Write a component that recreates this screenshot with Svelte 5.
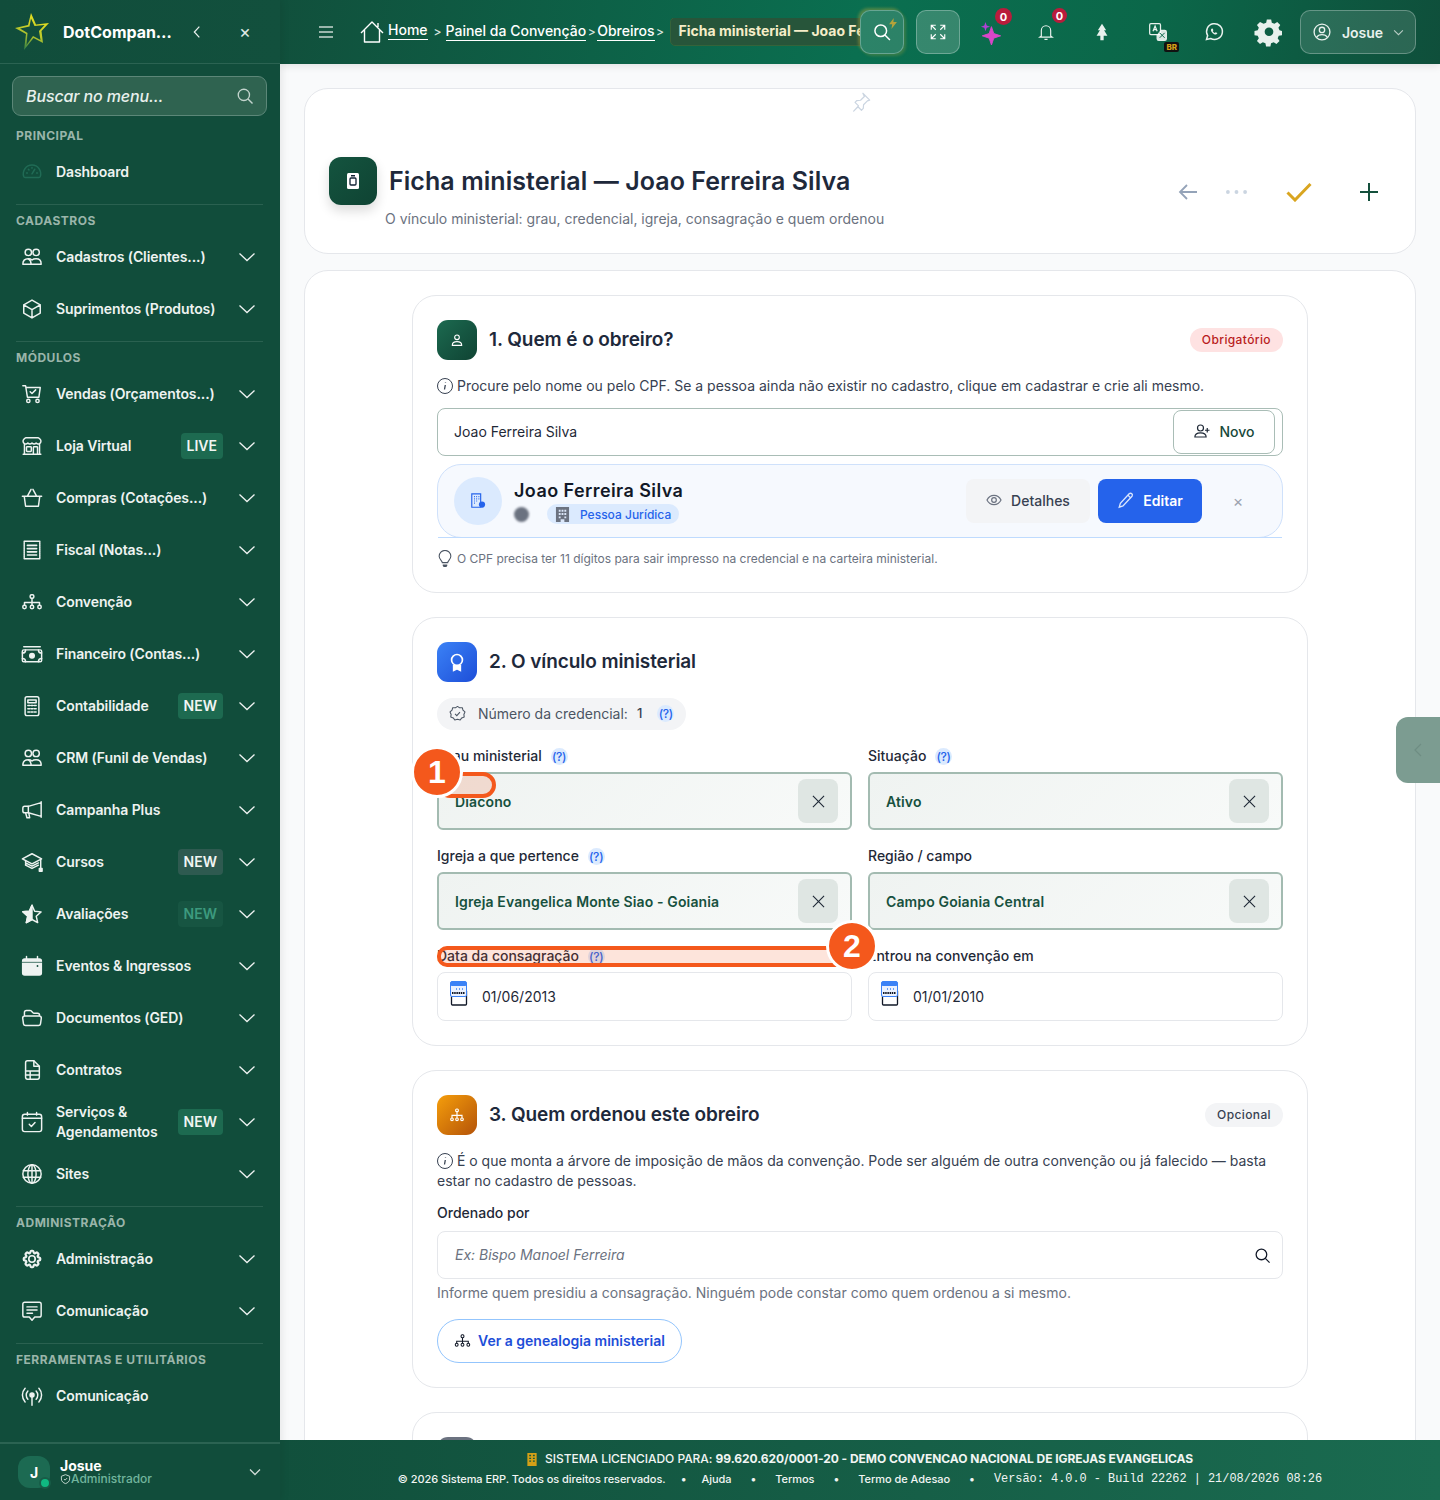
<script>
	const ic = {
		gauge: '<path d="M3 17a9.500 9.500 0 1 1 18 0c-.2.7-.8 1-1.500 1h-15c-.7 0-1.300-.3-1.500-1Z"/><path d="m12 14 3-5M6 13h1M17 13h1M8 9l.7.7M12 7v1"/>',
		users: '<circle cx="8" cy="7" r="3.500"/><circle cx="16.500" cy="7" r="3.500"/><path d="M2 20c0-4 2.500-6 6-6 1.500 0 3 .4 4 1.300 1-.9 2.800-1.300 4.500-1.300 3.500 0 5.500 2 5.500 5.500 0 .3-.2.500-.5.500H2.500c-.3 0-.5-.2-.5-.5Z"/><path d="M8 14c2 1 3 3 3 6"/>',
		cube: '<path d="m21 7.500-9-5.250L3 7.500m18 0-9 5.250m9-5.250v9l-9 5.250M3 7.500l9 5.250M3 7.500v9l9 5.250m0-9v9"/>',
		cart: '<path d="M2 3h3l2 12.500h12.500L21 5H6"/><path d="m10 9.500 2 2 4-4"/><circle cx="8" cy="19.500" r="1.800"/><circle cx="18" cy="19.500" r="1.800"/>',
		store: '<path d="M13.500 21v-7.500a.75.75 0 0 1 .75-.75h3a.75.75 0 0 1 .75.75V21m-4.500 0H2.360m11.140 0H18m0 0h3.640m-1.390 0V9.349M3.750 21V9.349m0 0a3.004 3.004 0 0 0 3.750-.615A2.993 2.993 0 0 0 9.750 9.750c.896 0 1.700-.393 2.250-1.016a2.993 2.993 0 0 0 2.250 1.016c.896 0 1.699-.393 2.250-1.015a3.001 3.001 0 0 0 3.750.614m-16.500 0a3.004 3.004 0 0 1-.621-4.720l1.189-1.190A1.500 1.500 0 0 1 5.378 3h13.243a1.500 1.500 0 0 1 1.060.44l1.190 1.189a3 3 0 0 1-.621 4.720M6.750 18h3.750a.75.75 0 0 0 .75-.75V13.500a.75.75 0 0 0-.75-.75H6.750a.75.75 0 0 0-.75.75v3.750c0 .414.336.75.75.75Z"/>',
		basket: '<path d="M1.500 10h21M3.500 10l1.500 11h14l1.500-11M7 10l4-7.500M17 10l-4-7.500"/>',
		receipt: '<rect x="3.500" y="2.500" width="17" height="19" stroke-dasharray="1.500 .6"/><path d="M7 7h10M7 10.500h10M7 14h10M7 17.500h10" stroke-width="1.800"/>',
		org: '<rect x="10" y="4" width="4" height="4" rx="1.500"/><circle cx="3.800" cy="17.500" r="1.900"/><circle cx="12" cy="17.500" r="1.900"/><circle cx="20.200" cy="17.500" r="1.900"/><path d="M12 8v7.500M3.800 15.500v-3h16.400v3"/>',
		money: '<path d="M3 4h18" /><rect x="1.500" y="7.500" width="21" height="13" rx="1.500"/><circle cx="12" cy="14" r="2.500" fill="currentColor"/><path d="M1.500 11c2 0 3.500-1.500 3.500-3.500M22.500 11c-2 0-3.500-1.500-3.500-3.500M1.500 17c2 0 3.500 1.500 3.500 3.500M22.500 17c-2 0-3.500 1.500-3.500 3.500"/>',
		calc: '<rect x="4.500" y="2" width="15" height="20.500" rx="2"/><path d="M7.500 5.500h9v3h-9ZM7.500 11.500h2M11 11.500h2M14.500 11.500h2M7.500 15h2M11 15h2M14.500 15h2M7.500 18.500h2M11 18.500h2M14.500 18.500h2" stroke-width="1.700"/>',
		mega: '<path d="M22 3v17M22 4 8 8H4a2 2 0 0 0-2 2v3a2 2 0 0 0 2 2h4l14 4"/><path d="M8 8v7M5 15l1.500 5.500h3L8.500 15.500"/>',
		cap: '<path d="M12 3 1.500 8.500 12 14l10.500-5.500Z"/><path d="M5 11v4.500l7 3.500 7-3.500M5 13l7 3.500 7-3.500"/><path d="M21.500 9.500V19"/><rect x="20" y="19" width="3" height="3" fill="currentColor"/>',
		star: '<path d="M12 2.500 14.900 9l7 .7-5.300 4.700 1.600 7L12 18l-6.200 3.500 1.600-7L2 9.600 9.100 9Z"/><path d="M12 2.500 9.100 9 2 9.600l5.400 4.800-1.600 7L12 18Z" fill="currentColor"/>',
		cal: '<path d="M6 1.500v3M18 1.500v3" /><path fill="currentColor" stroke="none" d="M1 6.500A3 3 0 0 1 4 3.500h16a3 3 0 0 1 3 3v13a3 3 0 0 1-3 3H4a3 3 0 0 1-3-3Z"/><path d="M1 8h22" stroke="#114d3b" stroke-width=".8"/><circle cx="18" cy="12" r="1" fill="#114d3b" stroke="none"/>',
		folder: '<path d="M3.750 9.776c.112-.017.227-.026.344-.026h15.812c.117 0 .232.009.344.026m-16.500 0a2.250 2.250 0 0 0-1.883 2.542l.857 6a2.250 2.250 0 0 0 2.227 1.932H19.050a2.250 2.250 0 0 0 2.227-1.932l.857-6a2.250 2.250 0 0 0-1.883-2.542m-16.500 0V6A2.250 2.250 0 0 1 6 3.750h3.879a1.500 1.500 0 0 1 1.060.44l2.122 2.120a1.500 1.500 0 0 0 1.060.44H18A2.250 2.250 0 0 1 20.250 9v.776"/>',
		doc: '<path d="M14 2H7a2 2 0 0 0-2 2v16a2 2 0 0 0 2 2h11a2 2 0 0 0 2-2V8Z"/><path d="M14 2v6h6M5 13h15M5 17.500h15M10 13v9"/>',
		calcheck: '<path d="M7 1.500v3M17 1.500v3"/><rect x="1.500" y="3.500" width="21" height="19" rx="2.500"/><path d="M1.500 8h21"/><path d="m9 14.500 2.300 2.300 4-4.300"/>',
		globe: '<circle cx="12" cy="12" r="10"/><ellipse cx="12" cy="12" rx="4.500" ry="10"/><path d="M2.500 8.500h19M2.500 15.500h19M12 2v20"/>',
		cog: '<g stroke-width="2.400"><path d="M10.343 3.940c.09-.542.56-.94 1.110-.94h1.093c.55 0 1.020.398 1.110.94l.149.894c.07.424.384.764.78.93.398.164.855.142 1.205-.108l.737-.527a1.125 1.125 0 0 1 1.450.12l.773.774c.39.389.44 1.002.12 1.450l-.527.737c-.25.35-.272.806-.107 1.204.165.397.505.71.93.78l.893.15c.543.09.94.559.94 1.109v1.094c0 .55-.397 1.020-.94 1.110l-.894.149c-.424.07-.764.383-.929.78-.165.398-.143.854.107 1.204l.527.738c.32.447.269 1.060-.12 1.450l-.774.773a1.125 1.125 0 0 1-1.449.12l-.738-.527c-.35-.25-.806-.272-1.203-.107-.398.165-.71.505-.781.929l-.149.894c-.09.542-.56.94-1.110.94h-1.094c-.55 0-1.019-.398-1.110-.94l-.148-.894c-.071-.424-.384-.764-.781-.93-.398-.164-.854-.142-1.204.108l-.738.527c-.447.32-1.060.269-1.450-.12l-.773-.774a1.125 1.125 0 0 1-.12-1.450l.527-.737c.25-.35.272-.806.108-1.204-.165-.397-.506-.71-.93-.78l-.894-.15c-.542-.09-.94-.56-.94-1.109v-1.094c0-.55.398-1.020.94-1.110l.894-.149c.424-.07.765-.383.93-.78.165-.398.143-.854-.108-1.204l-.526-.738a1.125 1.125 0 0 1 .12-1.450l.773-.773a1.125 1.125 0 0 1 1.450-.12l.737.527c.35.25.807.272 1.204.107.397-.165.71-.505.78-.929l.15-.894Z"/></g><circle cx="12" cy="12" r="3.500" stroke-width="1.800"/>',
		chat: '<path d="M4 2.500h16a2 2 0 0 1 2 2v12a2 2 0 0 1-2 2h-5L12 22l-3-3.500H4a2 2 0 0 1-2-2v-12a2 2 0 0 1 2-2Z"/><path d="M6.500 7.500h11M6.500 11h11M6.500 14.500h6"/>',
		radio: '<circle cx="12" cy="11" r="2.200" fill="currentColor"/><path d="M12 13v9M7.500 6.500a6.500 6.500 0 0 0 0 9M16.500 6.500a6.500 6.500 0 0 1 0 9M4.500 3.500a11 11 0 0 0 0 15M19.500 3.500a11 11 0 0 1 0 15"/>'
	};

	const sections = [
		{ title: 'Principal', items: [{ name: 'Dashboard', icon: 'gauge', dim: true, noArrow: true }] },
		{ title: 'Cadastros', items: [
			{ name: 'Cadastros (Clientes...)', icon: 'users' },
			{ name: 'Suprimentos (Produtos)', icon: 'cube' }
		] },
		{ title: 'Módulos', items: [
			{ name: 'Vendas (Orçamentos...)', icon: 'cart' },
			{ name: 'Loja Virtual', icon: 'store', badge: 'LIVE' },
			{ name: 'Compras (Cotações...)', icon: 'basket' },
			{ name: 'Fiscal (Notas...)', icon: 'receipt' },
			{ name: 'Convenção', icon: 'org' },
			{ name: 'Financeiro (Contas...)', icon: 'money' },
			{ name: 'Contabilidade', icon: 'calc', badge: 'NEW' },
			{ name: 'CRM (Funil de Vendas)', icon: 'users' },
			{ name: 'Campanha Plus', icon: 'mega' },
			{ name: 'Cursos', icon: 'cap', badge: 'NEW', tone: 'grey' },
			{ name: 'Avaliações', icon: 'star', badge: 'NEW', tone: 'faint' },
			{ name: 'Eventos & Ingressos', icon: 'cal' },
			{ name: 'Documentos (GED)', icon: 'folder' },
			{ name: 'Contratos', icon: 'doc' },
			{ name: 'Serviços & Agendamentos', icon: 'calcheck', badge: 'NEW' },
			{ name: 'Sites', icon: 'globe' }
		] },
		{ title: 'Administração', items: [
			{ name: 'Administração', icon: 'cog' },
			{ name: 'Comunicação', icon: 'chat' }
		] },
		{ title: 'Ferramentas e Utilitários', items: [{ name: 'Comunicação', icon: 'radio', noArrow: true }] }
	];
</script>

<div class="app">
	<aside class="sidebar">
		<div class="brand">
			<svg class="logo" viewBox="0 0 35 38">
				<defs>
					<linearGradient id="starGrad" x1="0.7" y1="0" x2="0.3" y2="1">
						<stop offset="0" stop-color="#efe31d" />
						<stop offset="0.55" stop-color="#bcc92b" />
						<stop offset="1" stop-color="#2f7f45" />
					</linearGradient>
				</defs>
				<path fill="url(#starGrad)" fill-rule="evenodd" d="M16 0 21 11.500 34 10 26.500 18 28 30 18.500 25 9 37 11 21 0 15 13 12ZM16 5.500 14.500 13.500 5 15.500 12.500 20 11.500 32 18 23 25.500 27 24 18 29.500 12 19.500 13Z" />
			</svg>
			<span class="brand-name">DotCompany ERP</span>
			<svg class="brand-btn" viewBox="0 0 24 24" fill="none" stroke="currentColor" stroke-width="1.800"><path d="M15.500 4 8 12l7.500 8" /></svg>
			<span class="brand-close">×</span>
		</div>

		<div class="menu-search">
			<span>Buscar no menu...</span>
			<svg viewBox="0 0 24 24" fill="none" stroke="currentColor" stroke-width="1.800"><circle cx="10.500" cy="10.500" r="7.500" /><path d="m16 16 6 6" /></svg>
		</div>

		<nav>
			{#each sections as sec, i}
				<div class="nav-section" class:ruled={i < sections.length - 1}>
					<div class="nav-title">{sec.title}</div>
					{#each sec.items as item}
						<div class="nav-item">
							<svg class="nav-icon" class:dim={item.dim} viewBox="0 0 24 24" fill="none" stroke="currentColor" stroke-width="1.600" stroke-linecap="round" stroke-linejoin="round">{@html ic[item.icon]}</svg>
							<span class="nav-label">{item.name}</span>
							{#if item.badge}
								<span class="nav-badge {item.tone || ''}">{item.badge}</span>
							{/if}
							{#if !item.noArrow}
								<svg class="nav-arrow" viewBox="0 0 18 10" fill="none" stroke="currentColor" stroke-width="1.300"><path d="M1.500 1.500 9 8.500l7.500-7" /></svg>
							{/if}
						</div>
					{/each}
				</div>
			{/each}
		</nav>

		<div class="side-user">
			<div class="side-avatar">J<i></i></div>
			<div class="side-who">
				<strong>Josue</strong>
				<span><svg viewBox="0 0 24 24" fill="none" stroke="currentColor" stroke-width="2"><path d="M12 2.500 21 6v6c0 5-4 8.500-9 10-5-1.500-9-5-9-10V6Z" /><path d="m8.500 12 2.500 2.500 4.500-4.500" /></svg>Administrador</span>
			</div>
			<svg class="side-caret" viewBox="0 0 12 8" fill="none" stroke="currentColor" stroke-width="1.300"><path d="M1 1.500 6 6.500l5-5" /></svg>
		</div>
	</aside>

	<main class="main">
		<header class="topbar">
			<svg class="burger" viewBox="0 0 14 12" fill="none" stroke="currentColor" stroke-width="1.300"><path d="M0 1h14M0 6h14M0 11h14" /></svg>
			<div class="crumbs">
				<svg class="home" viewBox="0 0 24 22" fill="none" stroke="currentColor" stroke-width="1.400" stroke-linejoin="round"><path d="M1 12 12 1l11 11M4.500 9v12h15V9M18 2v4" /></svg>
				<a class="first">Home</a>
				<em class="sep wide">&gt;</em>
				<a>Painel da Convenção</a>
				<em class="sep">&gt;</em>
				<a>Obreiros</a>
				<em class="sep">&gt;</em>
				<span class="crumb-now">Ficha ministerial — Joao Ferreira Silva</span>
			</div>
			<div class="tools">
				<button class="glass search-btn">
					<svg viewBox="0 0 24 24" fill="none" stroke="currentColor" stroke-width="1.800"><circle cx="10.500" cy="10.500" r="7" /><path d="m15.500 15.500 6 6" /></svg>
					<svg class="bolt" viewBox="0 0 10 14" fill="#b5a33a"><path d="M6 0 0 8h4l-1 6 7-9H5.500Z" /></svg>
				</button>
				<button class="glass expand-btn">
					<svg viewBox="0 0 24 24" fill="none" stroke="currentColor" stroke-width="1.500"><path d="M3 9V3h6M3 3l6 6M21 9V3h-6M21 3l-6 6M3 15v6h6M3 21l6-6M21 15v6h-6M21 21l-6-6" /></svg>
				</button>
				<div class="tool spark">
					<svg viewBox="0 0 24 24" fill="#d946c8"><path d="M12.500 4 15 11.500 22.500 14 15 16.500 12.500 24 10 16.500 2.500 14 10 11.500Z" stroke="#d946c8" stroke-linejoin="round" /><path d="M6 -1 7.300 2.700 11 4 7.300 5.300 6 9 4.700 5.300 1 4 4.700 2.700Z" fill="#b13fd6" /></svg>
					<b class="count">0</b>
				</div>
				<div class="tool bell">
					<svg viewBox="0 0 24 24" fill="none" stroke="currentColor" stroke-width="1.500"><path d="M6 17V10a6 6 0 0 1 12 0v7l2 1.500H4ZM10 21.500h4" /></svg>
					<b class="count">0</b>
				</div>
				<div class="tool tree">
					<svg viewBox="0 0 24 24" fill="currentColor"><path d="M12 2 7 10h2.500l-4 6.500H10V22h4v-5.500h4.500l-4-6.500H17Z" /></svg>
				</div>
				<div class="tool lang">
					<svg viewBox="0 0 24 24" fill="none" stroke="currentColor" stroke-width="1.500"><rect x="2" y="2" width="13" height="13" rx="1.500" /><path d="m6 11 2.500-6 2.500 6M7 9.200h3" /><path d="M11 15v5a2 2 0 0 0 2 2h7a2 2 0 0 0 2-2v-8a2 2 0 0 0-2-2h-5" fill="#fff" fill-opacity=".85" /><path d="m14 13 6 6M20 13l-6 6" stroke="#0b6a4d" stroke-width="1.200" /></svg>
					<span class="br">BR</span>
				</div>
				<div class="tool wa">
					<svg viewBox="0 0 24 24" fill="none" stroke="currentColor" stroke-width="1.800"><path d="M3 21l1.400-4.700A9.500 9.500 0 1 1 8 19.800Z" /><path d="M9 8c-1 .8-.8 2.500.5 4.200 1.500 2 3.500 3 4.800 2.800 1-.2 1.600-1 1.700-1.700l-2-1-1 1c-1-.4-2-1.300-2.500-2.500l.8-1-1-2Z" fill="currentColor" stroke="none" /></svg>
				</div>
				<div class="tool gear">
					<svg viewBox="0 0 24 24" fill="currentColor" fill-rule="evenodd"><path d="M10 1h4l.6 3 2.400 1 2.600-1.700 2.800 2.800L20.700 8.700l1 2.300 2.300.7v4l-3 .6-1 2.400 1.700 2.600-2.800 2.800-2.600-1.700-2.400 1-.6 3h-4l-.6-3-2.400-1-2.600 1.700-2.800-2.800 1.700-2.600-1-2.400-3-.6v-4l3-.6 1-2.400-1.700-2.600 2.800-2.800L7 5l2.400-1ZM12 8.500a4 4 0 1 0 0 8 4 4 0 0 0 0-8Z" transform="translate(0 -.5) scale(1 .98)" /></svg>
				</div>
				<button class="glass user-btn">
					<svg viewBox="0 0 24 24" fill="none" stroke="currentColor" stroke-width="1.600"><circle cx="12" cy="12" r="9.500" /><circle cx="12" cy="9.500" r="3.200" /><path d="M5.500 18.500c1.500-2.500 4-3.300 6.500-3.300s5 .8 6.500 3.300" /></svg>
					<span>Josue</span>
					<svg class="user-caret" viewBox="0 0 12 8" fill="none" stroke="currentColor" stroke-width="1.200"><path d="M1 1.500 6 6.500l5-5" /></svg>
				</button>
			</div>
		</header>

		<div class="content">
			<section class="page-head card">
				<svg class="pin" viewBox="0 0 24 24" fill="none" stroke="currentColor" stroke-width="1.300" stroke-linejoin="round"><path d="M14 2.500l7.500 7.500-2.500.8-4.200 4.200-.3 4-2 2-3.800-3.800L4 22l5.300-5.800L5.500 12.400l2-2 4-.3L15.700 6Z" /></svg>
				<div class="head-left">
					<div class="head-row">
						<div class="head-icon">
							<svg viewBox="0 0 14 16"><rect x="1" y="0" width="12" height="16" rx="1.500" fill="#fff" /><rect x="4" y="5" width="6" height="7" rx="1" fill="none" stroke="#123" stroke-width="1.300" /><rect x="5" y="2" width="4" height="1.500" fill="#123" /></svg>
						</div>
						<h1>Ficha ministerial — Joao Ferreira Silva</h1>
					</div>
					<p class="head-sub">O vínculo ministerial: grau, credencial, igreja, consagração e quem ordenou</p>
				</div>
				<div class="head-actions">
					<svg class="back" viewBox="0 0 20 18" fill="none" stroke="currentColor" stroke-width="1.800"><path d="M19 9H2M9 2 2 9l7 7" /></svg>
					<svg class="dots" viewBox="0 0 22 4" fill="currentColor"><circle cx="2" cy="2" r="2" /><circle cx="11" cy="2" r="2" /><circle cx="20" cy="2" r="2" /></svg>
					<svg class="ok" viewBox="0 0 26 20" fill="none" stroke="currentColor" stroke-width="3"><path d="M1.500 10.500 9 18 24.500 2" /></svg>
					<svg class="plus" viewBox="0 0 18 18" fill="none" stroke="currentColor" stroke-width="2"><path d="M9 0v18M0 9h18" /></svg>
				</div>
			</section>

			<div class="form-card card">
				<div class="form-col">
					<section class="block">
						<div class="block-head">
							<div class="block-icon green">
								<svg viewBox="0 0 24 24" fill="none" stroke="currentColor" stroke-width="1.700"><circle cx="12" cy="8" r="3.500" /><path d="M5 19.500c0-3 2.500-5 7-5s7 2 7 5v.5H5Z" /></svg>
							</div>
							<h2>1. Quem é o obreiro?</h2>
							<span class="tag required">Obrigatório</span>
						</div>
						<p class="info">
							<svg viewBox="0 0 16 16" fill="none" stroke="currentColor" stroke-width="1"><circle cx="8" cy="8" r="7.500" /><path d="M8.300 7 7.500 11.500M8.500 4.500v.5" stroke-width="1.300" /></svg>
							Procure pelo nome ou pelo CPF. Se a pessoa ainda não existir no cadastro, clique em cadastrar e crie ali mesmo.
						</p>
						<div class="search-line">
							<span>Joao Ferreira Silva</span>
							<button class="new-btn">
								<svg viewBox="0 0 24 24" fill="none" stroke="currentColor" stroke-width="1.600"><circle cx="10" cy="8" r="4" /><path d="M2.500 20c0-3.500 3-5.500 7.500-5.500s7.500 2 7.500 5.500ZM19 8v6M16 11h6" /></svg>
								Novo
							</button>
						</div>
						<div class="person">
							<div class="person-avatar">
								<svg viewBox="0 0 18 18" fill="none" stroke="#2563eb" stroke-width="1.300"><path d="M2 1h10v15H2Z" /><path d="M4.500 4h1M7 4h1M9.500 4h1M4.500 6.500h1M7 6.500h1M9.500 6.500h1M4.500 9h1M7 9h1M4.500 11.500h1" stroke-width="1.400" /><circle cx="13.500" cy="13" r="3.500" fill="#2563eb" stroke="none" /></svg>
							</div>
							<div class="person-main">
								<strong>Joao Ferreira Silva</strong>
								<div class="person-meta">
									<i class="print"></i>
									<span class="kind">
										<svg viewBox="0 0 16 18" fill="#6b7280"><path d="M1 1h14v16H1Z" /><path d="M4 4h2v2H4ZM7 4h2v2H7ZM10 4h2v2h-2ZM4 7.500h2v2H4ZM7 7.500h2v2H7ZM10 7.500h2v2h-2ZM4 11h2v2H4ZM10 11h2v2h-2ZM6 14h4v3H6Z" fill="#dbe6f8" /></svg>
										Pessoa Jurídica
									</span>
								</div>
							</div>
							<button class="soft-btn">
								<svg viewBox="0 0 24 24" fill="none" stroke="#6b7280" stroke-width="1.800"><path d="M1.500 12C4 7 8 5 12 5s8 2 10.500 7C20 17 16 19 12 19s-8-2-10.500-7Z" /><circle cx="12" cy="12" r="3.500" /></svg>
								Detalhes
							</button>
							<button class="primary-btn">
								<svg viewBox="0 0 24 24" fill="none" stroke="currentColor" stroke-width="1.800"><path d="M16.500 3.500a2.500 2.500 0 0 1 3.500 3.500L8 20l-5 1.500L4.500 16.500Z" /><path d="m14.500 5.500 4 4" /></svg>
								Editar
							</button>
							<span class="person-x">×</span>
						</div>
						<p class="tip">
							<svg viewBox="0 0 16 20" fill="none" stroke="#4b5563" stroke-width="1.200"><path d="M5 14c0-2-3.500-3.500-3.500-7a6.500 6.500 0 0 1 13 0c0 3.500-3.500 5-3.500 7Z" /><path d="M5.500 16h5v1.500l-1 1.500h-3l-1-1.500Z" fill="#4b5563" stroke="none" /></svg>
							O CPF precisa ter 11 dígitos para sair impresso na credencial e na carteira ministerial.
						</p>
					</section>

					<section class="block">
						<div class="block-head">
							<div class="block-icon blue">
								<svg viewBox="0 0 24 24" fill="none" stroke="currentColor" stroke-width="2"><circle cx="12" cy="9.500" r="6.500" /><path d="M8 15.500v6.500l4-2 4 2v-6.500" fill="currentColor" /></svg>
							</div>
							<h2>2. O vínculo ministerial</h2>
						</div>
						<div class="cred">
							<svg viewBox="0 0 24 24" fill="none" stroke="#4b5563" stroke-width="1.500"><path d="M12 2l3 2 3.800-.2.9 3.500 2.800 2.500-1.500 3.500.5 3.700-3.500 1.200-2.200 3-3.800-1-3.800 1-2.200-3-3.500-1.200.5-3.700L1.500 9.800l2.800-2.500.9-3.500L9 4Z" stroke-linejoin="round" /><path d="m8.500 12.500 2.500 2.500 4.500-5" /></svg>
							<span>Número da credencial:</span>
							<b>1</b>
							<span class="q">(?)</span>
						</div>

						<div class="fields">
							<div class="field">
								<div class="label">Grau ministerial <span class="q">(?)</span></div>
								<div class="chosen"><span>Diacono</span><button aria-label="Limpar"><svg viewBox="0 0 14 14" fill="none" stroke="currentColor" stroke-width="1.200"><path d="m1 1 12 12M13 1 1 13" /></svg></button></div>
							</div>
							<div class="field">
								<div class="label">Situação <span class="q">(?)</span></div>
								<div class="chosen"><span>Ativo</span><button aria-label="Limpar"><svg viewBox="0 0 14 14" fill="none" stroke="currentColor" stroke-width="1.200"><path d="m1 1 12 12M13 1 1 13" /></svg></button></div>
							</div>
							<div class="field">
								<div class="label">Igreja a que pertence <span class="q">(?)</span></div>
								<div class="chosen"><span>Igreja Evangelica Monte Siao - Goiania</span><button aria-label="Limpar"><svg viewBox="0 0 14 14" fill="none" stroke="currentColor" stroke-width="1.200"><path d="m1 1 12 12M13 1 1 13" /></svg></button></div>
							</div>
							<div class="field">
								<div class="label">Região / campo</div>
								<div class="chosen"><span>Campo Goiania Central</span><button aria-label="Limpar"><svg viewBox="0 0 14 14" fill="none" stroke="currentColor" stroke-width="1.200"><path d="m1 1 12 12M13 1 1 13" /></svg></button></div>
							</div>
							<div class="field">
								<div class="label">Data da consagração <span class="q">(?)</span></div>
								<div class="date">
									<svg viewBox="0 0 18 25" fill="none"><rect x="1.500" y="9" width="15" height="15" rx="1" stroke="#111827" stroke-width="1.300" fill="#fff" /><rect x=".5" y=".5" width="16" height="15" rx="1.500" fill="#eaf1fe" stroke="#3b82f6" /><rect x=".5" y=".5" width="16" height="4.500" rx="1.500" fill="#3b82f6" /><path d="M2 12h13" stroke="#111827" stroke-width="2" stroke-dasharray="1.500 .7" /><path d="M6 8h1M9 8h1M12 8h1" stroke="#3b82f6" stroke-width="1.300" /></svg>
									01/06/2013
								</div>
							</div>
							<div class="field">
								<div class="label">Entrou na convenção em</div>
								<div class="date">
									<svg viewBox="0 0 18 25" fill="none"><rect x="1.500" y="9" width="15" height="15" rx="1" stroke="#111827" stroke-width="1.300" fill="#fff" /><rect x=".5" y=".5" width="16" height="15" rx="1.500" fill="#eaf1fe" stroke="#3b82f6" /><rect x=".5" y=".5" width="16" height="4.500" rx="1.500" fill="#3b82f6" /><path d="M2 12h13" stroke="#111827" stroke-width="2" stroke-dasharray="1.500 .7" /><path d="M6 8h1M9 8h1M12 8h1" stroke="#3b82f6" stroke-width="1.300" /></svg>
									01/01/2010
								</div>
							</div>

							<div class="mark mark-one"></div>
							<div class="step step-one">1</div>
							<div class="mark mark-two"></div>
							<div class="step step-two">2</div>
						</div>
					</section>

					<section class="block">
						<div class="block-head">
							<div class="block-icon amber">
								<svg viewBox="0 0 24 24" fill="none" stroke="currentColor" stroke-width="1.700"><rect x="10" y="3" width="4" height="4" rx="1.500" /><circle cx="4.500" cy="18.500" r="2" /><circle cx="12" cy="18.500" r="2" /><circle cx="19.500" cy="18.500" r="2" /><path d="M12 7v9.500M4.500 16.500V12.500h15v4" /></svg>
							</div>
							<h2>3. Quem ordenou este obreiro</h2>
							<span class="tag optional">Opcional</span>
						</div>
						<p class="info">
							<svg viewBox="0 0 16 16" fill="none" stroke="currentColor" stroke-width="1"><circle cx="8" cy="8" r="7.500" /><path d="M8.300 7 7.500 11.500M8.500 4.500v.5" stroke-width="1.300" /></svg>
							É o que monta a árvore de imposição de mãos da convenção. Pode ser alguém de outra convenção ou já falecido — basta estar no cadastro de pessoas.
						</p>
						<div class="label order-label">Ordenado por</div>
						<div class="order-input">
							<span>Ex: Bispo Manoel Ferreira</span>
							<svg viewBox="0 0 24 24" fill="none" stroke="#111827" stroke-width="1.800"><circle cx="10.500" cy="10.500" r="7.500" /><path d="m16 16 6 6" /></svg>
						</div>
						<p class="order-hint">Informe quem presidiu a consagração. Ninguém pode constar como quem ordenou a si mesmo.</p>
						<button class="tree-btn">
							<svg viewBox="0 0 24 24" fill="none" stroke="#111827" stroke-width="1.500"><rect x="10" y="4" width="4" height="4" rx="1.500" /><circle cx="3.800" cy="18" r="2" /><circle cx="12" cy="18" r="2" /><circle cx="20.200" cy="18" r="2" /><path d="M12 8v8M3.800 16v-3h16.400v3" /></svg>
							Ver a genealogia ministerial
						</button>
					</section>

					<section class="block last">
						<div class="block-icon slate"></div>
					</section>
				</div>
			</div>
		</div>

		<button class="side-tab" aria-label="Abrir painel">
			<svg viewBox="0 0 8 14" fill="none" stroke="#6f8d83" stroke-width="1.200"><path d="M7 1 1 7l6 6" /></svg>
		</button>

		<footer class="foot">
			<div class="foot-license">
				<svg viewBox="0 0 10 14" fill="#d4a017"><path d="M0 0h10v14H0Z" /><path d="M2 2h2v1.500H2ZM6 2h2v1.500H6ZM2 5h2v1.500H2ZM6 5h2v1.500H6ZM2 8h2v1.500H2ZM6 8h2v1.500H6Z" fill="#17593f" /></svg>
				SISTEMA LICENCIADO PARA: <b>99.620.620/0001-20 - DEMO CONVENCAO NACIONAL DE IGREJAS EVANGELICAS</b>
			</div>
			<div class="foot-links">
				<span>© 2026 Sistema ERP. Todos os direitos reservados.</span>
				<i>•</i><span>Ajuda</span><i>•</i><span>Termos</span><i>•</i><span>Termo de Adesao</span><i>•</i>
				<code>Versão: 4.0.0 - Build 22262 | 21/08/2026 08:26</code>
			</div>
		</footer>
	</main>
</div>

<style>
	:global(body) {
		margin: 0;
		background: #f9fafb;
		font-family: Inter, 'Liberation Sans', sans-serif;
	}

	.app {
		display: grid;
		grid-template-columns: 280px 1fr;
		height: 1500px;
		overflow: hidden;
	}

	button {
		font: inherit;
		cursor: pointer;
	}

	/* sidebar */
	.sidebar {
		display: flex;
		flex-direction: column;
		height: 1500px;
		background: #114d3b;
		color: #eef3f1;
		box-shadow: 2px 0 8px rgba(0, 0, 0, 0.08);
		z-index: 2;
	}

	.brand {
		display: flex;
		align-items: center;
		height: 63px;
		flex: none;
		padding-left: 15px;
		background: linear-gradient(90deg, #114d3b, #12503d);
		border-bottom: 1px solid #2b6352;
	}

	.logo {
		width: 35px;
		height: 38px;
		flex: none;
	}

	.brand-name {
		width: 112px;
		margin-left: 13px;
		overflow: hidden;
		font-size: 16px;
		font-weight: 700;
		color: #fff;
		white-space: nowrap;
		text-overflow: ellipsis;
	}

	.brand-btn {
		width: 16px;
		height: 16px;
		margin-left: 14px;
	}

	.brand-close {
		margin-left: 34px;
		font-size: 18px;
		line-height: 1;
		color: #dfe8e4;
	}

	.menu-search {
		display: flex;
		align-items: center;
		justify-content: space-between;
		flex: none;
		height: 38px;
		margin: 12px 13px 0 12px;
		padding: 0 12px 0 13px;
		background: #2f6350;
		border: 1px solid #5c8778;
		border-radius: 9px;
		font-size: 16px;
		font-style: italic;
		font-weight: 500;
		letter-spacing: -0.12px;
		color: #e8f0ec;
	}

	.menu-search svg {
		width: 18px;
		height: 18px;
		color: #c3d4cd;
	}

	.nav-section {
		padding-top: 8px;
	}

	.nav-section:first-child {
		padding-top: 12px;
	}

	.nav-section.ruled::after {
		content: '';
		display: block;
		height: 1px;
		margin: 6px 17px 0 16px;
		background: #2a6150;
	}

	.nav-title {
		height: 16px;
		margin: 0 16px 2px;
		font-size: 12px;
		font-weight: 700;
		line-height: 16px;
		letter-spacing: 0.5px;
		text-transform: uppercase;
		color: #9ab5aa;
	}

	.nav-item {
		display: flex;
		align-items: center;
		height: 52px;
		padding-left: 21px;
		font-size: 14px;
		font-weight: 600;
		line-height: 20px;
		color: #eef3f1;
	}

	.nav-icon {
		width: 22px;
		height: 22px;
		flex: none;
		margin-right: 13px;
	}

	.nav-icon.dim {
		color: #206b55;
	}

	.nav-label {
		flex: 1;
		min-width: 0;
		letter-spacing: -0.1px;
	}

	.nav-badge {
		height: 26px;
		padding: 0 6px;
		border-radius: 4px;
		background: #1d6a50;
		font-size: 14px;
		line-height: 26px;
		color: #f1f5f3;
	}

	.nav-badge.grey {
		background: #2e5a50;
	}

	.nav-badge.faint {
		background: #175542;
		color: #3c9a7e;
	}

	.nav-arrow {
		width: 18px;
		height: 10px;
		flex: none;
		margin: 0 24px 0 15px;
	}

	nav {
		flex: 1;
		min-height: 0;
	}

	.side-user {
		display: flex;
		align-items: center;
		flex: none;
		height: 56px;
		padding-left: 18px;
		border-top: 2px solid #2b6352;
	}

	.side-avatar {
		position: relative;
		display: flex;
		align-items: center;
		justify-content: center;
		width: 32px;
		height: 32px;
		border-radius: 12px;
		background: #1c6a52;
		font-size: 14px;
		font-weight: 700;
		color: #fff;
	}

	.side-avatar i {
		position: absolute;
		right: -1px;
		bottom: -1px;
		width: 8px;
		height: 8px;
		border: 2px solid #185c47;
		border-radius: 50%;
		background: #10b981;
	}

	.side-who {
		display: flex;
		flex-direction: column;
		flex: 1;
		margin-left: 10px;
	}

	.side-who strong {
		font-size: 14px;
		font-weight: 700;
		line-height: 13px;
		color: #fff;
	}

	.side-who span {
		display: flex;
		align-items: center;
		font-size: 12px;
		font-weight: 500;
		line-height: 14px;
		color: #71b59d;
	}

	.side-who span svg {
		width: 11px;
		height: 12px;
		color: #cfe0d9;
	}

	.side-caret {
		width: 12px;
		height: 8px;
		margin-right: 19px;
		color: #cfdcd7;
	}

	/* topbar */
	.main {
		position: relative;
		min-width: 0;
		display: flex;
		flex-direction: column;
	}

	.topbar {
		position: relative;
		display: flex;
		align-items: center;
		flex: none;
		height: 64px;
		background: linear-gradient(100deg, #11503c 0%, #0a6f50 50%, #0b6749 75%, #0f4f3b 100%);
		color: #fff;
		box-shadow: 0 2px 8px rgba(0, 0, 0, 0.1);
	}

	.burger {
		width: 14px;
		height: 12px;
		margin-left: 39px;
		color: #c7d8d1;
		flex: none;
	}

	.crumbs {
		display: flex;
		align-items: center;
		width: 500px;
		margin-left: 27px;
		overflow: hidden;
		flex: none;
		font-size: 14px;
		font-weight: 500;
		color: #fff;
	}

	.home {
		width: 24px;
		height: 22px;
		flex: none;
		margin-right: 4px;
	}

	.crumbs a {
		flex: none;
		margin-top: -2px;
		line-height: 18px;
		border-bottom: 1px solid #fff;
	}

	.crumbs a.first {
		margin-top: -4px;
	}

	.sep {
		flex: none;
		width: 11px;
		margin-top: -1px;
		font-style: normal;
		font-size: 12px;
		text-align: center;
		color: #d6e3de;
	}

	.sep.wide {
		box-sizing: border-box;
		width: 18px;
		padding-right: 4px;
		text-align: right;
	}

	.crumb-now {
		flex: none;
		height: 27px;
		margin-left: 4px;
		margin-top: -1px;
		padding: 0 8px;
		border: 1px solid #35633a;
		border-radius: 5px;
		background: #27553a;
		font-weight: 700;
		line-height: 26px;
		white-space: nowrap;
		color: #f5edc8;
	}

	.tools {
		display: flex;
		align-items: center;
		flex: 1;
		min-width: 0;
	}

	.glass {
		display: flex;
		align-items: center;
		justify-content: center;
		height: 44px;
		border: 1px solid rgba(255, 255, 255, 0.28);
		border-radius: 10px;
		background: rgba(255, 255, 255, 0.14);
		color: #fff;
		padding: 0;
	}

	.search-btn {
		position: relative;
		flex: none;
		width: 44px;
		box-shadow: -2px -2px 3px rgba(190, 170, 60, 0.4), 2px 2px 3px rgba(190, 170, 60, 0.25);
	}

	.search-btn > svg:first-child {
		width: 20px;
		height: 20px;
	}

	.bolt {
		position: absolute;
		top: 7px;
		right: 6px;
		width: 8px;
		height: 11px;
	}

	.expand-btn {
		flex: none;
		width: 44px;
		margin-left: 12px;
		background: rgba(255, 255, 255, 0.18);
	}

	.expand-btn svg {
		width: 18px;
		height: 18px;
	}

	.tool {
		position: relative;
		flex: none;
		width: 22px;
		height: 22px;
		color: #e8f1ed;
	}

	.tool > svg {
		display: block;
		width: 100%;
		height: 100%;
		overflow: visible;
	}

	.spark {
		margin-left: 20px;
	}

	.spark > svg {
		margin-top: 2px;
	}

	.bell {
		margin-left: 33px;
	}

	.bell > svg {
		transform: scale(0.85);
	}

	.tree {
		margin-left: 35px;
		width: 20px;
	}

	.lang {
		margin-left: 36px;
		width: 20px;
		height: 20px;
	}

	.wa {
		margin-left: 36px;
		width: 20px;
		height: 20px;
	}

	.gear {
		margin-left: 32px;
		width: 26px;
		height: 26px;
	}

	.count {
		position: absolute;
		display: flex;
		align-items: center;
		justify-content: center;
		width: 17px;
		height: 17px;
		border-radius: 50%;
		background: #b91c3c;
		font-size: 11px;
		font-weight: 700;
		color: #fff;
	}

	.spark .count {
		top: -13px;
		right: -10px;
	}

	.bell .count {
		top: -13px;
		right: -10px;
		width: 15px;
		height: 15px;
	}

	.br {
		position: absolute;
		right: -11px;
		bottom: -10px;
		padding: 0 2px;
		border-radius: 2px;
		background: #111;
		font-size: 8px;
		font-weight: 800;
		line-height: 10px;
		color: #d4a017;
	}

	.user-btn {
		flex: none;
		width: 116px;
		margin-left: 18px;
		gap: 0;
		font-size: 14px;
		font-weight: 600;
		background: rgba(255, 255, 255, 0.12);
		color: #e8f1ed;
	}

	.user-btn > svg:first-child {
		width: 20px;
		height: 20px;
		margin-right: 10px;
	}

	.user-caret {
		width: 11px;
		height: 7px;
		margin-left: 10px;
		color: #b9cdc5;
	}

	/* content */
	.content {
		display: flex;
		flex-direction: column;
		gap: 16px;
		padding: 24px;
	}

	.card {
		background: #fff;
		border: 1px solid #e5e7eb;
		border-radius: 24px;
	}

	.page-head {
		position: relative;
		display: flex;
		align-items: center;
		justify-content: space-between;
		padding: 68px 24px 24px;
	}

	.pin {
		position: absolute;
		top: 2px;
		left: 545px;
		width: 22px;
		height: 22px;
		color: #cbd5e1;
	}

	.head-row {
		display: flex;
		align-items: center;
		gap: 12px;
	}

	.head-icon {
		display: flex;
		align-items: center;
		justify-content: center;
		width: 48px;
		height: 48px;
		border-radius: 12px;
		background: linear-gradient(135deg, #14543f, #0f4333);
		box-shadow: 0 6px 12px rgba(0, 0, 0, 0.14);
	}

	.head-icon svg {
		width: 14px;
		height: 16px;
	}

	h1 {
		margin: 0;
		font-size: 25px;
		font-weight: 600;
		letter-spacing: 0.06px;
		color: #1e293b;
	}

	.head-sub {
		margin: 4px 0 0 56px;
		font-size: 14px;
		line-height: 20px;
		color: #6b7280;
	}

	.head-actions {
		display: flex;
		align-items: center;
		margin-right: 13px;
		margin-top: -2px;
	}

	.back {
		width: 20px;
		height: 18px;
		color: #94a3b8;
	}

	.dots {
		width: 21px;
		height: 4px;
		margin-left: 28px;
		color: #cbd5e1;
	}

	.ok {
		width: 26px;
		height: 20px;
		margin-left: 39px;
		color: #d9a520;
	}

	.plus {
		width: 18px;
		height: 18px;
		margin-left: 48px;
		color: #14503c;
	}

	.form-card {
		padding: 24px 0 24px;
	}

	.form-col {
		display: flex;
		flex-direction: column;
		gap: 24px;
		width: 896px;
		margin: 0 auto;
	}

	.block {
		padding: 24px;
		border: 1px solid #e5e7eb;
		border-radius: 24px;
		background: #fff;
	}

	.block.last {
		min-height: 200px;
	}

	.block-head {
		display: flex;
		align-items: center;
		gap: 12px;
	}

	.block-icon {
		display: flex;
		align-items: center;
		justify-content: center;
		flex: none;
		width: 40px;
		height: 40px;
		border-radius: 11px;
		color: #fff;
	}

	.block-icon svg {
		width: 16px;
		height: 16px;
	}

	.block-icon.green {
		background: linear-gradient(135deg, #1c6a50, #0f4333);
	}

	.block-icon.blue {
		background: linear-gradient(135deg, #3b82f6, #1d4ed8);
	}

	.block-icon.blue svg {
		width: 20px;
		height: 20px;
	}

	.block-icon.amber {
		background: linear-gradient(135deg, #f59e0b, #b45309);
	}

	.block-icon.slate {
		background: #6b7280;
	}

	h2 {
		flex: 1;
		margin: 0 0 2px;
		font-size: 19px;
		font-weight: 600;
		letter-spacing: -0.08px;
		color: #1e293b;
	}

	.tag {
		height: 24px;
		padding: 0 12px;
		border-radius: 12px;
		font-size: 12px;
		font-weight: 500;
		line-height: 24px;
		letter-spacing: 0.38px;
	}

	.required {
		background: #fee2e2;
		color: #b91c1c;
	}

	.optional {
		background: #f3f4f6;
		color: #374151;
	}

	.info {
		margin: 16px 0 0;
		font-size: 14px;
		line-height: 20px;
		color: #374151;
	}

	.info svg {
		width: 16px;
		height: 16px;
		vertical-align: -3px;
		color: #374151;
	}

	.search-line {
		display: flex;
		align-items: center;
		justify-content: space-between;
		height: 48px;
		box-sizing: border-box;
		margin-top: 12px;
		padding: 0 7px 0 16px;
		border: 1px solid #a9bdb6;
		border-radius: 8px;
		font-size: 14px;
		color: #1f2937;
	}

	.search-line span {
		padding-bottom: 2px;
	}

	.new-btn {
		display: flex;
		align-items: center;
		justify-content: center;
		gap: 8px;
		width: 102px;
		height: 44px;
		padding: 0 0 2px;
		border: 1px solid #a9bdb6;
		border-radius: 8px;
		background: #fff;
		font-size: 14px;
		font-weight: 500;
		color: #17493a;
	}

	.new-btn svg {
		width: 18px;
		height: 18px;
		color: #1f2937;
	}

	.person {
		position: relative;
		display: flex;
		align-items: center;
		box-sizing: border-box;
		height: 74px;
		margin-top: 8px;
		padding: 0 34px 0 16px;
		background: #f6f9fe;
		border: 1px solid #cfe1fb;
		border-radius: 24px;
	}

	.person::after {
		content: '';
		position: absolute;
		left: 0;
		right: 0;
		bottom: -1px;
		height: 1px;
		background: #bfdbfe;
	}

	.person-avatar {
		display: flex;
		align-items: center;
		justify-content: center;
		width: 48px;
		height: 48px;
		flex: none;
		border-radius: 50%;
		background: #dbeafe;
	}

	.person-avatar svg {
		width: 16px;
		height: 16px;
	}

	.person-main {
		flex: 1;
		margin: -2px 0 0 12px;
	}

	.person-main strong {
		display: block;
		font-size: 18px;
		font-weight: 600;
		line-height: 26px;
		letter-spacing: 0.42px;
		color: #111827;
	}

	.person-meta {
		display: flex;
		align-items: center;
		height: 20px;
		margin-bottom: -2px;
	}

	.print {
		width: 15px;
		height: 15px;
		border-radius: 50%;
		background: #6b7280;
		filter: blur(1px);
	}

	.kind {
		display: flex;
		align-items: center;
		gap: 10px;
		height: 20px;
		margin-left: 18px;
		padding: 0 8px;
		border-radius: 10px;
		background: #dbeafe;
		font-size: 12px;
		font-weight: 500;
		color: #2563eb;
	}

	.kind svg {
		width: 15px;
		height: 17px;
	}

	.soft-btn,
	.primary-btn {
		display: flex;
		align-items: center;
		justify-content: center;
		height: 44px;
		padding: 0 0 2px;
		border: 0;
		border-radius: 8px;
		font-size: 14px;
		font-weight: 500;
	}

	.soft-btn {
		gap: 9px;
		width: 124px;
		background: #f3f4f6;
		color: #374151;
	}

	.soft-btn svg {
		width: 16px;
		height: 16px;
	}

	.primary-btn {
		gap: 8px;
		width: 104px;
		margin-left: 8px;
		background: #2563eb;
		font-weight: 600;
		color: #fff;
	}

	.primary-btn svg {
		width: 18px;
		height: 18px;
		color: #d9e5fd;
	}

	.person-x {
		width: 20px;
		margin-left: 26px;
		font-size: 16px;
		text-align: center;
		color: #9ca3af;
	}

	.tip {
		display: flex;
		align-items: center;
		gap: 4px;
		height: 20px;
		margin: 10px 0 0;
		font-size: 12px;
		color: #6b7280;
	}

	.tip svg {
		width: 16px;
		height: 18px;
		margin-top: 2px;
	}

	.cred {
		display: inline-flex;
		align-items: center;
		box-sizing: border-box;
		height: 32px;
		margin-top: 16px;
		padding: 0 12px 2px;
		border-radius: 16px;
		background: #f3f4f6;
		font-size: 14px;
		color: #4b5563;
	}

	.cred svg {
		width: 17px;
		height: 17px;
		margin-right: 12px;
	}

	.cred b {
		margin: 0 15px 0 9px;
		font-size: 13px;
		font-weight: 500;
		color: #374151;
	}

	.q {
		display: inline-block;
		width: 17px;
		border-radius: 50%;
		background: #dbeafe;
		font-size: 12px;
		font-weight: 500;
		line-height: 17px;
		letter-spacing: -0.3px;
		text-align: center;
		color: #2563eb;
	}

	.fields {
		position: relative;
		display: grid;
		grid-template-columns: 415px 415px;
		gap: 16px;
		margin-top: 16px;
	}

	.label {
		height: 20px;
		margin-bottom: 6px;
		font-size: 14px;
		font-weight: 500;
		line-height: 20px;
		color: #1f2937;
	}

	.label .q {
		margin-left: 5px;
	}

	.chosen {
		display: flex;
		align-items: center;
		justify-content: space-between;
		box-sizing: border-box;
		height: 58px;
		padding: 0 12px 0 16px;
		border: 2px solid #a3bbb1;
		border-radius: 6px;
		background: linear-gradient(135deg, #eff3f1, #f8faf9);
		font-size: 14px;
		font-weight: 600;
		letter-spacing: 0.13px;
		color: #17513e;
	}

	.chosen button {
		display: flex;
		align-items: center;
		justify-content: center;
		width: 40px;
		height: 44px;
		padding: 0;
		border: 0;
		border-radius: 8px;
		background: #dfe6e3;
		color: #1f2937;
	}

	.chosen button svg {
		width: 13px;
		height: 13px;
	}

	.date {
		display: flex;
		align-items: center;
		gap: 14px;
		box-sizing: border-box;
		height: 49px;
		padding: 0 12px;
		border: 1px solid #e5e7eb;
		border-radius: 8px;
		font-size: 14px;
		color: #1f2937;
	}

	.date svg {
		width: 18px;
		height: 25px;
		margin-top: -7px;
	}

	.mark {
		position: absolute;
		box-sizing: border-box;
		border: 4px solid #f4581c;
		background: rgba(244, 88, 28, 0.16);
	}

	.mark-one {
		top: 26px;
		left: 0;
		width: 59px;
		height: 26px;
		border-radius: 13px;
	}

	.mark-two {
		top: 200px;
		left: 0;
		width: 415px;
		height: 21px;
		border-radius: 10px;
	}

	.step {
		position: absolute;
		display: flex;
		align-items: center;
		justify-content: center;
		box-sizing: content-box;
		width: 46px;
		height: 46px;
		border: 3px solid #fff;
		border-radius: 50%;
		background: #f4581c;
		font-family: 'Liberation Sans', sans-serif;
		font-size: 32px;
		font-weight: 700;
		color: #fff;
	}

	.step-one {
		top: 0;
		left: -26px;
	}

	.step-two {
		top: 174px;
		left: 389px;
	}

	.order-label {
		margin: 12px 0 8px;
	}

	.order-input {
		display: flex;
		align-items: center;
		justify-content: space-between;
		box-sizing: border-box;
		height: 48px;
		padding: 0 11px 0 17px;
		border: 1px solid #e5e7eb;
		border-radius: 8px;
		font-size: 14px;
		font-style: italic;
		color: #6b7280;
	}

	.order-input span {
		padding-bottom: 2px;
	}

	.order-input svg {
		width: 17px;
		height: 17px;
	}

	.order-hint {
		margin: 4px 0 0;
		font-size: 14px;
		line-height: 20px;
		color: #6b7280;
	}

	.tree-btn {
		display: flex;
		align-items: center;
		gap: 7px;
		height: 44px;
		margin-top: 16px;
		padding: 0 16px 2px;
		border: 1px solid #93c5fd;
		border-radius: 22px;
		background: #fff;
		font-size: 14px;
		font-weight: 600;
		color: #1d4ed8;
	}

	.tree-btn svg {
		width: 17px;
		height: 17px;
	}

	/* overlays */
	.side-tab {
		position: absolute;
		top: 717px;
		right: 0;
		display: flex;
		align-items: center;
		width: 44px;
		height: 66px;
		padding: 0 0 0 18px;
		border: 0;
		border-radius: 12px 0 0 12px;
		background: #7c9c91;
	}

	.side-tab svg {
		width: 8px;
		height: 14px;
	}

	.foot {
		position: absolute;
		left: 0;
		right: 0;
		top: 1440px;
		height: 60px;
		background: linear-gradient(90deg, #11503c, #1a6b50);
		color: #f1f5f3;
		text-align: center;
	}

	.foot-license {
		margin-top: 10px;
		height: 18px;
		font-size: 12px;
		font-weight: 500;
		line-height: 18px;
		letter-spacing: -0.05px;
	}

	.foot-license svg {
		width: 10px;
		height: 13px;
		vertical-align: -3px;
		margin-right: 5px;
	}

	.foot-license b {
		font-weight: 700;
	}

	.foot-links {
		display: flex;
		align-items: center;
		justify-content: center;
		margin-top: 4px;
		font-size: 11px;
		font-weight: 500;
		letter-spacing: -0.05px;
	}

	.foot-links i {
		margin: 0 19px;
		font-style: normal;
	}

	.foot-links i:first-of-type {
		margin: 0 15px;
	}

	.foot-links code {
		font-family: 'Liberation Mono', monospace;
		font-size: 11.9px;
		letter-spacing: 0;
	}
</style>
